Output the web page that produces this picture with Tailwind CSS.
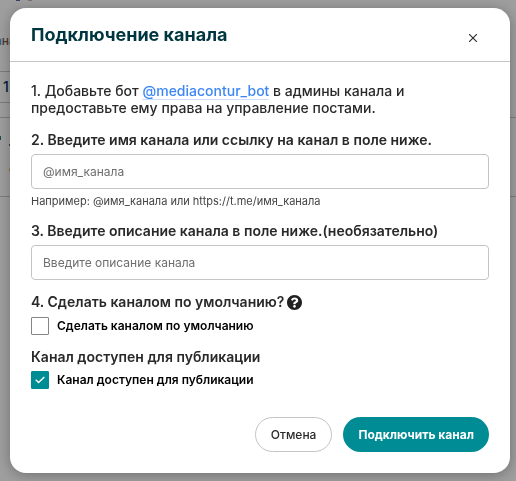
<!DOCTYPE html>
<html lang="ru">
<head>
    <meta charset="UTF-8">
    <meta name="viewport" content="width=device-width, initial-scale=1.0">
    <title>Подключение канала</title>
    <script src="https://cdn.jsdelivr.net/npm/@tailwindcss/browser@4"></script>
</head>
<body class="bg-white font-['Inter','Noto_Sans',sans-serif] text-[#292929] overflow-hidden">

    <!-- Page behind the dialog -->
    <div aria-hidden="true" class="text-xs">
        <div class="flex gap-2 h-8 pl-4">
            <span class="w-1 h-px bg-[#5a6f9c]"></span>
            <span class="w-1 h-px bg-[#b8b8b8]"></span>
        </div>
        <div class="h-[39px] leading-[18px] -ml-[5px] font-medium"><span class="text-[#4a90e2]">а</span><span class="text-[#7a5a4c]">на</span></div>
        <div class="h-8 w-7 border-y border-[#c8c8c8] pl-[3px] text-sm leading-[30px] font-medium text-[#0d2d5e]">1</div>
        <div class="flex gap-2 mt-3.5 h-20 pt-[18px] border-y border-[#c8c8c8]">
            <span class="w-px h-1 bg-[#1f7a80]"></span>
            <span class="flex flex-col gap-[22px] pt-2">
                <span class="w-1 h-0.5 bg-[#8a5a3c]"></span>
                <span class="w-1 h-1 rounded-full bg-[#f0a840]"></span>
            </span>
        </div>
    </div>

    <!-- Modal -->
    <div class="fixed inset-0 bg-black/38 pl-[10px] pt-2 pr-[6px]">
        <div role="dialog" aria-labelledby="modalTitle" class="w-full bg-white rounded-2xl shadow-[0_2px_14px_rgba(0,0,0,0.3)]">
            <header class="flex items-center justify-between h-[54px] px-[21px] border-b border-[#c4c4c4]">
                <h1 id="modalTitle" class="text-lg leading-6 font-bold text-[#003640]">Подключение канала</h1>
                <button type="button" aria-label="Закрыть" class="p-3 pt-[18px]">
                    <svg class="size-2" viewBox="0 0 8 8" fill="none" stroke="#292929" stroke-width="1.1"><path d="M0 0l8 8M8 0L0 8"/></svg>
                </button>
            </header>

            <form class="px-[21px] pt-5 pb-[21px] text-sm leading-[18px] font-medium">
                <p class="leading-[17px]">1. Добавьте бот <a href="#" class="text-[#3d87f5] border-b border-[#cfe0fb]">@mediacontur_bot</a> в админы канала и предоставьте ему права на управление постами.</p>

                <label for="channelName" class="block mt-[15px] font-semibold">2. Введите имя канала или ссылку на канал в поле ниже.</label>
                <input id="channelName" type="text" placeholder="@имя_канала" class="block w-full h-[35px] mt-[5px] px-[11px] rounded border border-[#c4c4c4] text-xs font-normal placeholder:text-[#6e6e6e]">
                <p class="mt-[5px] text-[11px] leading-[15px] font-normal text-[#444]">Например: @имя_канала или https://t.me/имя_канала</p>

                <label for="channelDescription" class="block mt-[13px] font-semibold">3. Введите описание канала в поле ниже.(необязательно)</label>
                <input id="channelDescription" type="text" placeholder="Введите описание канала" class="block w-full h-[35px] mt-[5px] px-[11px] rounded border border-[#c4c4c4] text-xs font-normal placeholder:text-[#6e6e6e]">

                <div class="flex items-center gap-[3px] mt-[13px] font-semibold">
                    <h2>4. Сделать каналом по умолчанию?</h2>
                    <svg class="size-[15px]" viewBox="8 8 496 496" fill="#212121"><path d="M504 256c0 137-111 248-248 248S8 393 8 256 119 8 256 8s248 111 248 248zM262.700 90c-54.500 0-89.300 23-116.500 63.800-3.500 5.300-2.400 12.400 2.700 16.300l34.700 26.300c5.200 3.900 12.600 3 16.700-2.100 17.900-22.700 30.100-35.800 57.300-35.800 20.400 0 45.700 13.100 45.700 33 0 15-12.400 22.700-32.500 34C247.100 238.500 216 255 216 296v4c0 6.600 5.400 12 12 12h56c6.600 0 12-5.400 12-12v-1.300c0-28.700 84-29.900 84-107.700 0-58.500-60.700-101-117.300-101zM256 338c-25.400 0-46 20.600-46 46s20.600 46 46 46 46-20.600 46-46-20.600-46-46-46z"/></svg>
                </div>
                <label class="flex items-center gap-2 mt-1.5 text-xs leading-[18px] font-semibold text-black">
                    <input type="checkbox" class="appearance-none size-[18px] rounded-[1px] border border-[#858585]">
                    Сделать каналом по умолчанию
                </label>

                <h2 class="mt-[13px] font-semibold">Канал доступен для публикации</h2>
                <label class="flex items-center gap-2 mt-[5px] text-xs leading-[18px] font-semibold text-black">
                    <span class="grid">
                        <input type="checkbox" checked class="peer appearance-none col-start-1 row-start-1 size-[18px] rounded-[1px] border border-[#858585] checked:bg-[#008c95] checked:border-[#008c95]">
                        <svg class="hidden peer-checked:block pointer-events-none col-start-1 row-start-1 place-self-center w-2.5 h-2" viewBox="0 0 10 8" fill="none" stroke="#fff" stroke-width="1.4"><path d="M.7 3.800L3.600 6.600 9.300 1"/></svg>
                    </span>
                    Канал доступен для публикации
                </label>

                <div class="flex justify-end gap-[11px] mt-7 text-xs">
                    <button type="button" class="h-[35px] px-[15px] rounded-full border border-[#c4c4c4] font-medium">Отмена</button>
                    <button type="submit" class="h-[35px] px-[15px] rounded-full bg-[#008c95] font-bold text-white">Подключить канал</button>
                </div>
            </form>
        </div>
    </div>

</body>
</html>
